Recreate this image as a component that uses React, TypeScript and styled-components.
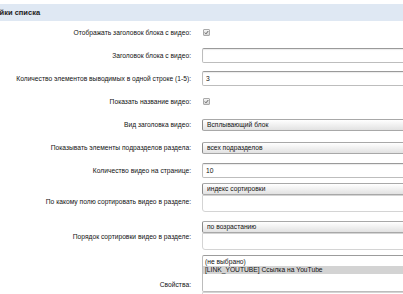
import React from "react";
import styled, { createGlobalStyle } from "styled-components";

const Global = createGlobalStyle`
  html, body { margin: 0; padding: 0; background: #fff; overflow: hidden; }
  body { font-family: "Liberation Sans", Arial, sans-serif; }
`;

const Page = styled.div`
  width: 403px;
  height: 294px;
  overflow: hidden;
  padding-top: 4px;
  box-sizing: border-box;
`;

const Heading = styled.div`
  height: 17px;
  background: #dfe8f3;
  display: flex;
  align-items: center;
  font-size: 7.5px;
  font-weight: bold;
  color: #222;
  white-space: nowrap;
  text-indent: -27px;
`;

const Row = styled.div<{ $h?: number }>`
  display: grid;
  grid-template-columns: 191px 1fr;
  column-gap: 11px;
  align-items: center;
  height: ${(p) => p.$h ?? 23}px;
`;

const Label = styled.div`
  text-align: right;
  font-size: 6.7px;
  color: #111;
  white-space: nowrap;
`;

const Field = styled.div<{ $top?: number }>`
  align-self: ${(p) => (p.$top !== undefined ? "start" : "center")};
  padding-top: ${(p) => p.$top ?? 0}px;
  display: flex;
  flex-direction: column;
  align-items: flex-start;
`;

const Text = styled.input`
  box-sizing: border-box;
  width: 260px;
  height: 15px;
  margin: 0;
  padding: 0 3px;
  border: 1px solid #bdbdbd;
  border-top-color: #9a9a9a;
  border-radius: 2px;
  box-shadow: inset 0 1px 1px rgba(0, 0, 0, 0.08);
  font-family: "Liberation Sans", Arial, sans-serif;
  font-size: 6.7px;
  color: #111;
  background: #fff;
  outline: none;
`;

const Extra = styled(Text)`
  height: 17px;
  border-top-color: #e4e4e4;
  border-color: #d4d4d4;
  border-radius: 0 0 3px 3px;
  box-shadow: none;
`;

const Select = styled.select`
  box-sizing: border-box;
  appearance: none;
  width: 260px;
  height: 12px;
  margin: 0;
  padding: 0 4px;
  border: 1px solid #a8a8a8;
  border-left-color: #8a8a8a;
  border-radius: 2px;
  background: linear-gradient(#ffffff, #e2e2e2);
  font-family: "Liberation Sans", Arial, sans-serif;
  font-size: 6.7px;
  line-height: 10px;
  color: #111;
  outline: none;
`;

const ListBox = styled.select`
  box-sizing: border-box;
  appearance: none;
  width: 260px;
  height: 37px;
  margin: 0;
  padding: 2px 0;
  border: 1px solid #bcbcbc;
  border-top-color: #9c9c9c;
  border-radius: 2px;
  font-family: "Liberation Sans", Arial, sans-serif;
  font-size: 6.7px;
  color: #111;
  outline: none;
  overflow: hidden;
  option {
    padding: 0 2px;
    height: 7px;
    line-height: 7px;
  }
  option:checked {
    background: linear-gradient(#d3d3d3, #d3d3d3);
    color: #111;
  }
`;

const Check = styled.span`
  display: inline-flex;
  width: 7px;
  height: 7px;
  box-sizing: border-box;
  border: 1px solid #a9a9a9;
  border-radius: 1px;
  background: linear-gradient(#f4f4f4, #d6d6d6);
  align-items: center;
  justify-content: center;
  margin-left: 1px;
`;

const CheckBox = () => (
  <Check role="checkbox" aria-checked="true">
    <svg width="5" height="5" viewBox="0 0 5 5">
      <path d="M0.8 2.6 L2 3.8 L4.3 1" stroke="#555" strokeWidth="0.9" fill="none" />
    </svg>
  </Check>
);

export default function App() {
  return (
    <Page>
      <Global />
      <Heading>Настройки списка</Heading>
      <Row>
        <Label>Отображать заголовок блока с видео:</Label>
        <Field><CheckBox /></Field>
      </Row>
      <Row>
        <Label>Заголовок блока с видео:</Label>
        <Field><Text defaultValue="" /></Field>
      </Row>
      <Row>
        <Label>Количество элементов выводимых в одной строке (1-5):</Label>
        <Field><Text defaultValue="3" /></Field>
      </Row>
      <Row>
        <Label>Показать название видео:</Label>
        <Field><CheckBox /></Field>
      </Row>
      <Row>
        <Label>Вид заголовка видео:</Label>
        <Field>
          <Select defaultValue="popup">
            <option value="popup">Всплывающий блок</option>
          </Select>
        </Field>
      </Row>
      <Row>
        <Label>Показывать элементы подразделов раздела:</Label>
        <Field>
          <Select defaultValue="all">
            <option value="all">всех подразделов</option>
          </Select>
        </Field>
      </Row>
      <Row>
        <Label>Количество видео на странице:</Label>
        <Field><Text defaultValue="10" /></Field>
      </Row>
      <Row $h={38}>
        <Label>По какому полю сортировать видео в разделе:</Label>
        <Field $top={1}>
          <Select defaultValue="sort">
            <option value="sort">индекс сортировки</option>
          </Select>
          <Extra defaultValue="" />
        </Field>
      </Row>
      <Row $h={32}>
        <Label>Порядок сортировки видео в разделе:</Label>
        <Field $top={1}>
          <Select defaultValue="asc">
            <option value="asc">по возрастанию</option>
          </Select>
          <Extra defaultValue="" />
        </Field>
      </Row>
      <Row $h={64}>
        <Label>Свойства:</Label>
        <Field $top={3}>
          <ListBox multiple size={4} defaultValue={["LINK_YOUTUBE"]}>
            <option value="">(не выбрано)</option>
            <option value="LINK_YOUTUBE">[LINK_YOUTUBE] Ссылка на YouTube</option>
          </ListBox>
          <Extra defaultValue="" />
        </Field>
      </Row>
    </Page>
  );
}
